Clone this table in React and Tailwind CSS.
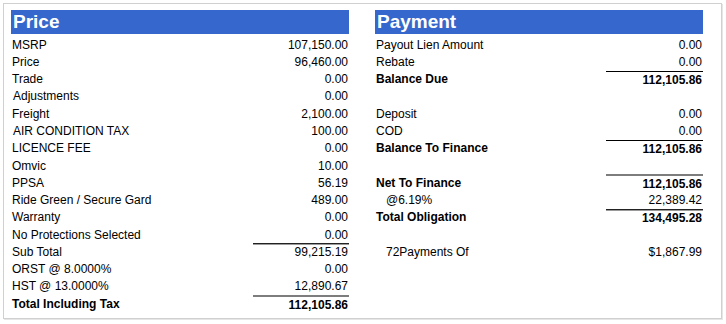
import React from "react";

// each row: label, value, and optional styling flags
const priceRows = [
  { label: "MSRP", value: "107,150.00" },
  { label: "Price", value: "96,460.00" },
  { label: "Trade", value: "0.00" },
  { label: "Adjustments", value: "0.00", nudge: true },
  { label: "Freight", value: "2,100.00" },
  { label: "AIR CONDITION TAX", value: "100.00", nudge: true },
  { label: "LICENCE FEE", value: "0.00" },
  { label: "Omvic", value: "10.00" },
  { label: "PPSA", value: "56.19" },
  { label: "Ride Green / Secure Gard", value: "489.00" },
  { label: "Warranty", value: "0.00" },
  { label: "No Protections Selected", value: "0.00" },
  { label: "Sub Total", value: "99,215.19", line: "dark" },
  { label: "ORST @ 8.0000%", value: "0.00" },
  { label: "HST @ 13.0000%", value: "12,890.67" },
  { label: "Total Including Tax", value: "112,105.86", line: "gray", bold: true },
];

const paymentRows = [
  { label: "Payout Lien Amount", value: "0.00" },
  { label: "Rebate", value: "0.00" },
  { label: "Balance Due", value: "112,105.86", line: "black", bold: true },
  { label: "", value: "" },
  { label: "Deposit", value: "0.00" },
  { label: "COD", value: "0.00" },
  { label: "Balance To Finance", value: "112,105.86", line: "black", bold: true },
  { label: "", value: "" },
  { label: "Net To Finance", value: "112,105.86", line: "gray", bold: true },
  { label: "@6.19%", value: "22,389.42", indent: true },
  { label: "Total Obligation", value: "134,495.28", line: "dark", bold: true },
  { label: "", value: "" },
  { label: "72Payments Of", value: "$1,867.99", indent: true },
];

const lineClass = (line) => {
  if (line === "dark") return "border-t border-[#222] shadow-[inset_0_1px_0_#9a9a9a]";
  if (line === "gray") return "border-t-2 border-[#7d7d7d]";
  if (line === "black") return "border-t border-[#000]";
  return "";
};

const Row = ({ row, valueWidth }) => (
  <div
    className={`flex h-[17.27px] items-center justify-between ${row.bold ? "font-bold" : ""}`}
  >
    <span className={row.indent ? "pl-[11px]" : row.nudge ? "pl-[2px]" : "pl-[1px]"}>
      {row.label}
    </span>
    <span
      className={`flex h-full items-center justify-end pr-[1px] ${valueWidth} ${lineClass(row.line)}`}
    >
      {row.value}
    </span>
  </div>
);

const Section = ({ title, rows, width, valueWidth }) => (
  <div className={`flex flex-col ${width}`}>
    <div className="flex h-[24px] items-center bg-[#3567cc] pl-[2px] text-[19px] font-bold text-white">
      {title}
    </div>
    <div className="mt-[2px] flex flex-col">
      {rows.map((row, i) => (
        <Row key={i} row={row} valueWidth={valueWidth} />
      ))}
    </div>
  </div>
);

export default function App() {
  return (
    <div className="h-[324px] w-[726px] bg-white pl-[3px] pt-[3px] font-['Liberation_Sans',Arial,sans-serif] text-[12px] text-black">
      <div className="flex h-[316px] w-[719px] gap-[26px] border border-[#d0d0d0] pl-[7px] pt-[6px] shadow-[1px_1px_0_#e6e6e6]">
        <Section title="Price" rows={priceRows} width="w-[338px]" valueWidth="w-[96px]" />
        <Section title="Payment" rows={paymentRows} width="w-[328px]" valueWidth="w-[97px]" />
      </div>
    </div>
  );
}
